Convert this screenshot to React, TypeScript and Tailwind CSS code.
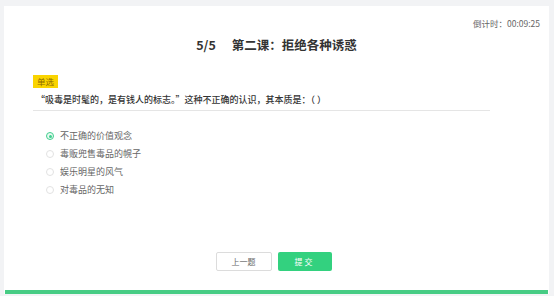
import React from "react"

const options = ["不正确的价值观念", "毒贩兜售毒品的幌子", "娱乐明星的风气", "对毒品的无知"]

function Radio({ checked }: { checked: boolean }) {
  if (checked) {
    return (
      <span className="flex h-[8px] w-[8px] items-center justify-center rounded-full border border-[#3fcf8e] bg-[#eafaf2]">
        <span className="h-[3px] w-[3px] rounded-full bg-[#3fcf8e]" />
      </span>
    )
  }
  return <span className="h-[8px] w-[8px] rounded-full border border-[#e2e2e2] bg-white" />
}

export default function App() {
  const font = { fontFamily: '"Noto Sans CJK SC", "Noto Sans", sans-serif' }
  return (
    <div
      className="flex h-[296px] w-[554px] bg-[#f2f3f5] pb-[2px] pl-[4px] pr-[5px] pt-[6px]"
      style={font}
    >
      <div className="flex flex-1 flex-col bg-white">
        {/* timer */}
        <div className="mt-[11px] flex justify-end pr-[9px] text-[8.5px] leading-[12px] text-[#666]">
          倒计时：00:09:25
        </div>

        {/* title */}
        <h1 className="mt-[8px] flex justify-center gap-[16px] text-[12.5px] font-bold leading-[16px] text-[#333]">
          <span>5/5</span>
          <span>第二课：拒绝各种诱惑</span>
        </h1>

        {/* question */}
        <div className="ml-[29px] mr-[59px] mt-[22px]">
          <div className="flex h-[13px] w-fit items-center bg-[#fad400] px-[4px] text-[8.5px] leading-[13px] text-[#8a6a00]">
            单选
          </div>
          <p className="mt-[6px] pb-[4px] pl-[3px] text-[9px] font-medium leading-[12px] text-[#333]">
            “吸毒是时髦的，是有钱人的标志。”这种不正确的认识，其本质是：（ ）
          </p>
          <div className="h-px bg-[#e5e5e5]" />
        </div>

        {/* options */}
        <div className="ml-[42px] mt-[19px] flex flex-col gap-[6px]">
          {options.map((o, i) => (
            <label key={o} className="flex h-[12px] items-center gap-[6px] text-[9px] text-[#666]">
              <Radio checked={i === 0} />
              <span>{o}</span>
            </label>
          ))}
        </div>

        <div className="flex-1" />

        {/* buttons */}
        <div className="mb-[19px] flex justify-center gap-[6px] pr-[6px]">
          <button className="h-[19px] w-[56px] rounded-[2px] border border-[#dcdcdc] bg-white text-[8px] text-[#666]">
            上一题
          </button>
          <button className="h-[19px] w-[54px] rounded-[2px] bg-[#33d17f] text-[8px] tracking-[2px] text-white">
            提交
          </button>
        </div>

        <div className="mx-[1px] h-[4px] bg-[#47cc84]" />
      </div>
    </div>
  )
}
